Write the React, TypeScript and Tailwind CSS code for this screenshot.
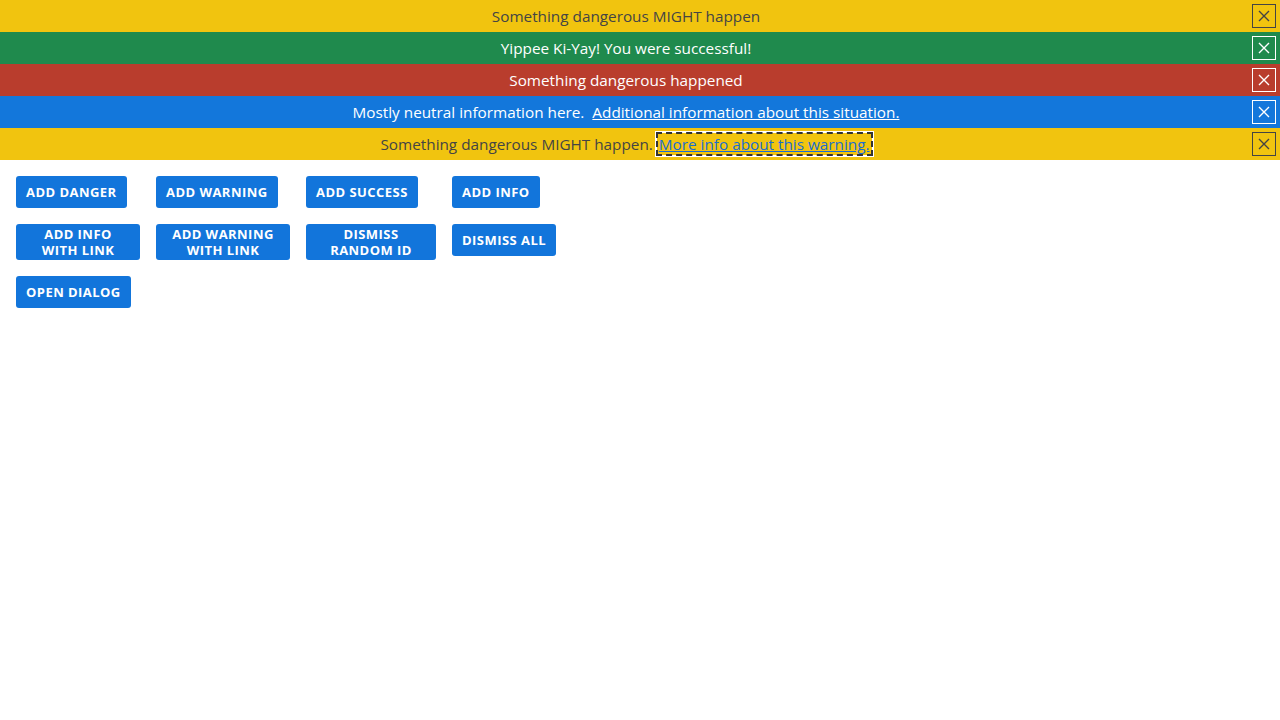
import React from 'react'

type Tone = 'warning' | 'success' | 'danger' | 'info'

interface Alert {
  id: number
  tone: Tone
  text: string
  link?: string
  focused?: boolean
}

const alerts: Alert[] = [
  { id: 1, tone: 'warning', text: 'Something dangerous MIGHT happen' },
  { id: 2, tone: 'success', text: 'Yippee Ki-Yay! You were successful!' },
  { id: 3, tone: 'danger', text: 'Something dangerous happened' },
  { id: 4, tone: 'info', text: 'Mostly neutral information here.', link: 'Additional information about this situation.' },
  { id: 5, tone: 'warning', text: 'Something dangerous MIGHT happen.', link: 'More info about this warning.', focused: true },
]

const toneClass: Record<Tone, string> = {
  warning: 'bg-[#f1c40f] text-[#444444]',
  success: 'bg-[#1f8a4d] text-white',
  danger: 'bg-[#b93d2d] text-white',
  info: 'bg-[#1377db] text-white',
}

function CloseIcon() {
  return (
    <svg width="12" height="12" viewBox="0 0 12 12" fill="none" stroke="currentColor" strokeWidth="1.4">
      <path d="M1 1l10 10M11 1L1 11" />
    </svg>
  )
}

function Banner({ alert }: { alert: Alert }) {
  return (
    <div className={`flex h-8 items-center ${toneClass[alert.tone]}`}>
      <div className="flex-1 text-center text-[15.3px] leading-8">
        {alert.text}
        {alert.link && (
          alert.tone === 'warning' ? (
            <a
              href="#"
              className="ml-1 px-[2px] py-[1px] text-[#1a6dd1] underline outline-2 outline-dashed outline-[#333333] -outline-offset-1 bg-[#f1c40f] shadow-[0_0_0_2px_white]"
            >
              {alert.link}
            </a>
          ) : (
            <a href="#" className="ml-2 underline">{alert.link}</a>
          )
        )}
      </div>
      <button className="mr-1 flex h-6 w-6 items-center justify-center border-[1.5px] border-current">
        <CloseIcon />
      </button>
    </div>
  )
}

const buttons: { label: React.ReactNode; width?: string }[] = [
  { label: 'Add danger' },
  { label: 'Add warning' },
  { label: 'Add success' },
  { label: 'Add info' },
  { label: <>Add info<br />with link</>, width: 'w-[124px]' },
  { label: <>Add warning<br />with link</>, width: 'w-[134px]' },
  { label: <>Dismiss<br />random ID</>, width: 'w-[130px]' },
  { label: 'Dismiss all' },
  { label: 'Open dialog' },
]

export default function App() {
  return (
    <div className="min-h-screen bg-white" style={{ fontFamily: '"Open Sans", "Noto Sans", sans-serif' }}>
      {alerts.map(a => (
        <Banner key={a.id} alert={a} />
      ))}

      <div className="grid grid-cols-[repeat(4,max-content)] items-start gap-4 p-4">
        {buttons.map((b, i) => (
          <div key={i} className="flex">
            <button
              className={`block rounded-[3px] bg-[#1275db] px-[10px] text-center text-[13px] font-bold uppercase leading-4 tracking-[0.035em] text-white ${b.width ? `${b.width} py-[2px]` : 'py-2'}`}
            >
              {b.label}
            </button>
          </div>
        ))}
      </div>
    </div>
  )
}
